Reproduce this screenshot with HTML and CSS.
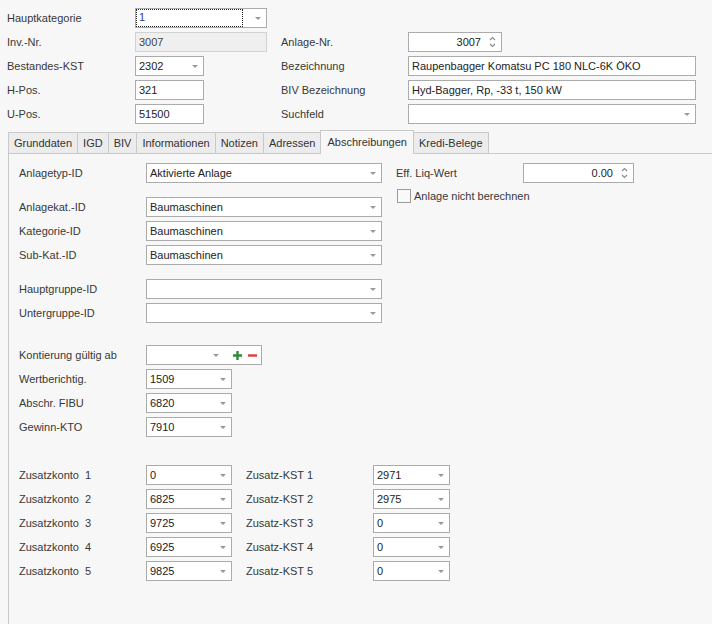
FILE: index.html
```html
<!DOCTYPE html>
<html lang="de">
<head>
  <meta charset="UTF-8" />
  <title>Anlage 3007</title>
  <link rel="stylesheet" href="styles.css">
</head>
<body>

  <div class="head">
    <div class="row">
      <span class="lbl lw-head">Hauptkategorie</span>
      <div class="field w132">
        <span class="val focused"><span class="focus-box">1</span></span>
        <span class="arrow"></span>
      </div>
    </div>
    <div class="row">
      <div class="pair">
        <span class="lbl lw-head">Inv.-Nr.</span>
        <div class="field disabled w132"><span class="val">3007</span></div>
      </div>
      <span class="lbl lw-head2">Anlage-Nr.</span>
      <div class="field num w94">
        <span class="val">3007</span>
        <svg class="spin" width="7" height="12" viewBox="0 0 7 12"><path d="M1 4 L3.5 1.5 L6 4 M1 8 L3.5 10.5 L6 8" fill="none" stroke="#8a8a8a" stroke-width="1.1"/></svg>
      </div>
    </div>
    <div class="row">
      <div class="pair">
        <span class="lbl lw-head">Bestandes-KST</span>
        <div class="field w69"><span class="val">2302</span><span class="arrow"></span></div>
      </div>
      <span class="lbl lw-head2">Bezeichnung</span>
      <div class="field w288"><span class="val">Raupenbagger Komatsu PC 180 NLC-6K ÖKO</span></div>
    </div>
    <div class="row">
      <div class="pair">
        <span class="lbl lw-head">H-Pos.</span>
        <div class="field w69"><span class="val">321</span></div>
      </div>
      <span class="lbl lw-head2">BIV Bezeichnung</span>
      <div class="field w288"><span class="val">Hyd-Bagger, Rp, -33 t, 150 kW</span></div>
    </div>
    <div class="row">
      <div class="pair">
        <span class="lbl lw-head">U-Pos.</span>
        <div class="field w69"><span class="val">51500</span></div>
      </div>
      <span class="lbl lw-head2">Suchfeld</span>
      <div class="field w288"><span class="val"></span><span class="arrow"></span></div>
    </div>
  </div>

  <div class="tabs">
    <div class="tab">Grunddaten</div>
    <div class="tab">IGD</div>
    <div class="tab">BIV</div>
    <div class="tab">Informationen</div>
    <div class="tab">Notizen</div>
    <div class="tab">Adressen</div>
    <div class="tab active">Abschreibungen</div>
    <div class="tab">Kredi-Belege</div>
  </div>

  <div class="panel">
    <div class="top">
      <div class="col-left">
        <div class="row">
          <span class="lbl lw">Anlagetyp-ID</span>
          <div class="field w236"><span class="val">Aktivierte Anlage</span><span class="arrow"></span></div>
        </div>
        <div class="group g-kat">
          <div class="row">
            <span class="lbl lw">Anlagekat.-ID</span>
            <div class="field w236"><span class="val">Baumaschinen</span><span class="arrow"></span></div>
          </div>
          <div class="row">
            <span class="lbl lw">Kategorie-ID</span>
            <div class="field w236"><span class="val">Baumaschinen</span><span class="arrow"></span></div>
          </div>
          <div class="row">
            <span class="lbl lw">Sub-Kat.-ID</span>
            <div class="field w236"><span class="val">Baumaschinen</span><span class="arrow"></span></div>
          </div>
        </div>
      </div>
      <div class="col-right">
        <div class="row">
          <span class="lbl lw">Eff. Liq-Wert</span>
          <div class="field num w111">
            <span class="val">0.00</span>
            <svg class="spin" width="7" height="12" viewBox="0 0 7 12"><path d="M1 4 L3.5 1.5 L6 4 M1 8 L3.5 10.5 L6 8" fill="none" stroke="#8a8a8a" stroke-width="1.1"/></svg>
          </div>
        </div>
        <label class="check">
          <span class="box"></span>
          <span>Anlage nicht berechnen</span>
        </label>
      </div>
    </div>

    <div class="group g-gruppe">
      <div class="row">
        <span class="lbl lw">Hauptgruppe-ID</span>
        <div class="field w236"><span class="val"></span><span class="arrow"></span></div>
      </div>
      <div class="row">
        <span class="lbl lw">Untergruppe-ID</span>
        <div class="field w236"><span class="val"></span><span class="arrow"></span></div>
      </div>
    </div>

    <div class="group g-konto">
      <div class="row">
        <span class="lbl lw">Kontierung gültig ab</span>
        <div class="field w116">
          <span class="val"></span>
          <span class="arrow"></span>
          <svg class="btn-plus" width="9" height="9" viewBox="0 0 9 9"><path d="M0 4.5 H9 M4.5 0 V9" stroke="#2e8b3a" stroke-width="2.4"/></svg>
          <svg class="btn-minus" width="9" height="9" viewBox="0 0 9 9"><path d="M0 4.5 H9" stroke="#e5393b" stroke-width="2.4"/></svg>
        </div>
      </div>
      <div class="row">
        <span class="lbl lw">Wertberichtig.</span>
        <div class="field w86"><span class="val">1509</span><span class="arrow"></span></div>
      </div>
      <div class="row">
        <span class="lbl lw">Abschr. FIBU</span>
        <div class="field w86"><span class="val">6820</span><span class="arrow"></span></div>
      </div>
      <div class="row">
        <span class="lbl lw">Gewinn-KTO</span>
        <div class="field w86"><span class="val">7910</span><span class="arrow"></span></div>
      </div>
    </div>

    <div class="group g-zusatz">
      <div class="row">
        <div class="pair-z">
          <span class="lbl lw">Zusatzkonto&nbsp; 1</span>
          <div class="field w86"><span class="val">0</span><span class="arrow"></span></div>
        </div>
        <span class="lbl lw">Zusatz-KST 1</span>
        <div class="field w77"><span class="val">2971</span><span class="arrow"></span></div>
      </div>
      <div class="row">
        <div class="pair-z">
          <span class="lbl lw">Zusatzkonto&nbsp; 2</span>
          <div class="field w86"><span class="val">6825</span><span class="arrow"></span></div>
        </div>
        <span class="lbl lw">Zusatz-KST 2</span>
        <div class="field w77"><span class="val">2975</span><span class="arrow"></span></div>
      </div>
      <div class="row">
        <div class="pair-z">
          <span class="lbl lw">Zusatzkonto&nbsp; 3</span>
          <div class="field w86"><span class="val">9725</span><span class="arrow"></span></div>
        </div>
        <span class="lbl lw">Zusatz-KST 3</span>
        <div class="field w77"><span class="val">0</span><span class="arrow"></span></div>
      </div>
      <div class="row">
        <div class="pair-z">
          <span class="lbl lw">Zusatzkonto&nbsp; 4</span>
          <div class="field w86"><span class="val">6925</span><span class="arrow"></span></div>
        </div>
        <span class="lbl lw">Zusatz-KST 4</span>
        <div class="field w77"><span class="val">0</span><span class="arrow"></span></div>
      </div>
      <div class="row">
        <div class="pair-z">
          <span class="lbl lw">Zusatzkonto&nbsp; 5</span>
          <div class="field w86"><span class="val">9825</span><span class="arrow"></span></div>
        </div>
        <span class="lbl lw">Zusatz-KST 5</span>
        <div class="field w77"><span class="val">0</span><span class="arrow"></span></div>
      </div>
    </div>
  </div>

</body>
</html>
```

FILE: styles.css
```css
html, body {
  height: 100%;
}

body {
  margin: 0;
  padding: 8px 0 0 7px;
  box-sizing: border-box;
  display: flex;
  flex-direction: column;
  background: #f7f7f7;
  color: #383838;
  font-family: 'Liberation Sans', Arial, sans-serif;
  font-size: 11px;
  overflow: hidden;
}

.row {
  display: flex;
  align-items: center;
  height: 20px;
  margin-bottom: 4px;
}

.pair {
  display: flex;
  align-items: center;
  width: 274px;
}

.pair-z {
  display: flex;
  align-items: center;
  width: 227px;
}

.lbl {
  line-height: 20px;
  white-space: nowrap;
  flex-shrink: 0;
}

.lw-head { width: 128px; }
.lw-head2 { width: 127px; }
.lw { width: 127px; }

/* input boxes */
.field {
  display: flex;
  align-items: center;
  height: 20px;
  box-sizing: border-box;
  border: 1px solid #ababab;
  background: #fff;
  color: #222;
  flex-shrink: 0;
}

.field .val {
  flex: 1;
  padding-left: 3px;
  white-space: nowrap;
  overflow: hidden;
  line-height: 18px;
}

.field.num .val {
  text-align: right;
  padding-right: 8px;
}

.field.disabled {
  background: #efefef;
  border-color: #d2d2d2;
  color: #444;
}

.val.focused {
  padding-left: 1px;
  padding-right: 15px;
  height: 18px;
  display: flex;
  align-items: center;
}

.focus-box {
  display: block;
  flex: 1;
  height: 16px;
  line-height: 15px;
  box-sizing: border-box;
  outline: 1px dotted #222;
  padding-left: 2px;
  margin-right: -2px;
  color: #2b3a8c;
}

.arrow {
  width: 0;
  height: 0;
  border-left: 3px solid transparent;
  border-right: 3px solid transparent;
  border-top: 3px solid #9a9a9a;
  margin-right: 5px;
  margin-top: 1px;
  flex-shrink: 0;
}

.spin {
  margin-right: 5px;
  flex-shrink: 0;
}

.btn-plus {
  margin-left: 9px;
}

.btn-minus {
  margin-left: 6px;
  margin-right: 4px;
}

.w132 { width: 132px; }
.w69 { width: 69px; }
.w94 { width: 94px; }
.w288 { width: 288px; }
.w236 { width: 236px; }
.w111 { width: 111px; }
.w116 { width: 116px; }
.w86 { width: 86px; }
.w77 { width: 77px; }

/* tabs */
.tabs {
  display: flex;
  align-items: flex-end;
  height: 23px;
  margin: 2px 0 0 1px;
  position: relative;
  z-index: 1;
}

.tab {
  height: 21px;
  line-height: 20px;
  box-sizing: border-box;
  padding: 0 5px;
  border: 1px solid #c9c9c9;
  border-bottom: none;
  margin-right: -1px;
  background: #ececec;
  color: #333;
  white-space: nowrap;
}

.tab.active {
  height: 24px;
  line-height: 23px;
  margin-bottom: -1px;
  padding: 0 6px;
  background: #f7f7f7;
  position: relative;
  z-index: 2;
}

.panel {
  flex: 1;
  margin-left: 1px;
  border-top: 1px solid #c9c9c9;
  border-left: 1px solid #c9c9c9;
  padding: 9px 0 0 10px;
}

.top {
  display: flex;
}

.col-left {
  width: 377px;
}

.group .row:last-child {
  margin-bottom: 0;
}

.g-kat { margin-top: 14px; }
.g-gruppe { margin-top: 14px; }
.g-konto { margin-top: 22px; }
.g-zusatz { margin-top: 28px; }

.check {
  display: flex;
  align-items: center;
  margin-top: 0;
  margin-left: 1px;
  height: 18px;
}

.check .box {
  width: 14px;
  height: 14px;
  box-sizing: border-box;
  border: 1px solid #9a9a9a;
  background: #f9f9f9;
  margin-right: 3px;
}
```
